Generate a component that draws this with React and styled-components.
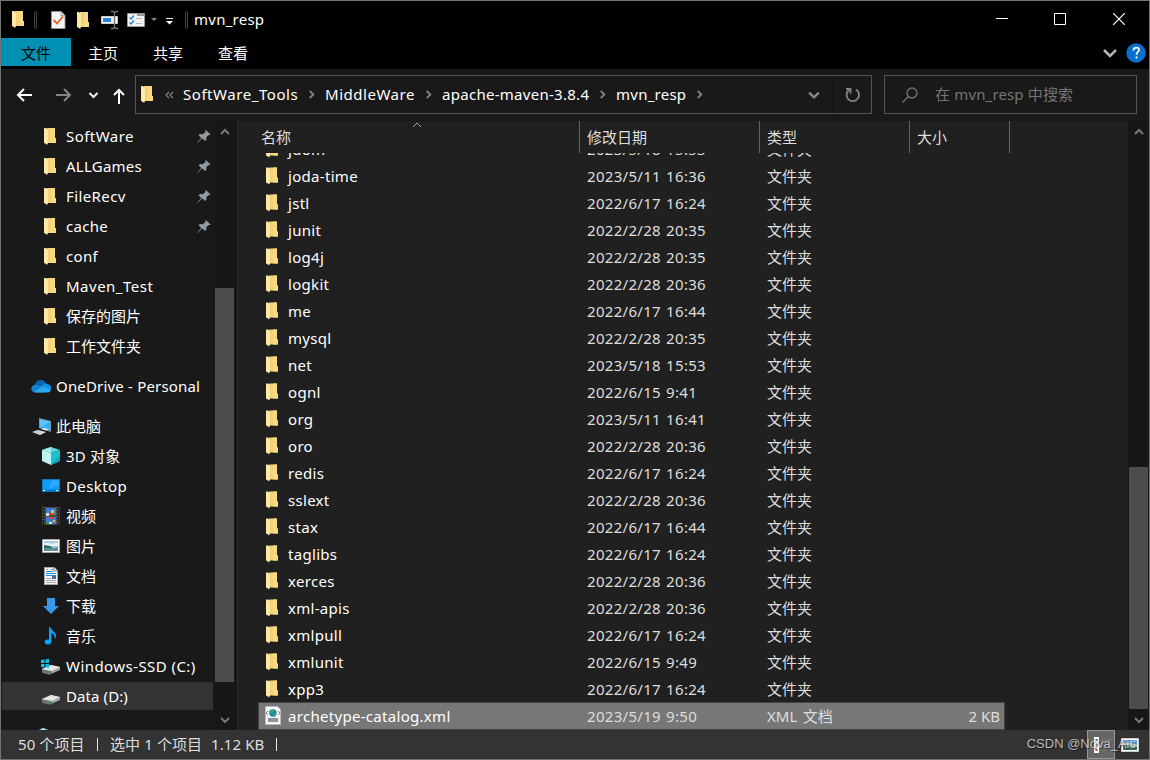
import React from 'react';
import styled, { createGlobalStyle } from 'styled-components';

const GlobalStyle = createGlobalStyle`
    * {
        box-sizing: border-box;
    }

    body {
        margin: 0;
        background: #191919;
        overflow: hidden;
    }

    svg {
        display: block;
        flex: none;
    }
`

const Window = styled.div`
    width: 1150px;
    height: 760px;
    display: flex;
    flex-direction: column;
    position: relative;
    border: 1px solid #747474;
    background: #191919;
    color: #fff;
    font-family: "Noto Sans", "Noto Sans CJK SC", sans-serif;
    font-size: 15px;
    line-height: 20px;
    white-space: nowrap;
`

const TitleBar = styled.div`
    height: 37px;
    display: flex;
    align-items: center;
    padding: 0 1px 1px 10px;
    background: #000;
`

const QuickAccess = styled.div`
    width: 183px;
    flex: none;
`

const Title = styled.div`
    flex: 1;
    letter-spacing: 0.25px;
`

const WindowButton = styled.div`
    width: 58.5px;
    display: flex;
    justify-content: center;
`

const Ribbon = styled.div`
    height: 31px;
    display: flex;
    background: #000;
`

const Tab = styled.div`
    width: 65px;
    height: 28px;
    display: flex;
    align-items: center;
    justify-content: center;
    padding: 2px 1px 0 0;
`

const FileTab = styled(Tab)`
    width: 70px;
    padding: 1px 0 0;
    color: #000;
    background: #0090b4;
`

const RibbonTools = styled.div`
    display: flex;
    align-items: center;
    height: 30px;
    gap: 9px;
    margin-left: auto;
    padding-right: 3px;
`

const NavBar = styled.div`
    height: 52px;
    display: flex;
    padding: 6px 12px 0 0;
`

const NavButtons = styled.div`
    width: 134px;
    flex: none;
`

const AddressBox = styled.div`
    width: 737px;
    height: 39px;
    display: flex;
    align-items: center;
    padding: 0 0 0 5px;
    border: 1px solid #535353;
`

const CrumbArrow = styled.div`
    width: 27px;
    display: flex;
    justify-content: center;
`

const Crumb = styled.div`
    width: ${({ $width }) => $width}px;
    padding-bottom: 2px;
    letter-spacing: ${({ $tracking }) => $tracking}px;
`

const AddressTools = styled.div`
    display: flex;
    align-items: center;
    gap: 5px;
    height: 100%;
    margin-left: auto;
`

const Refresh = styled.div`
    width: 39px;
    height: 100%;
    display: flex;
    align-items: center;
    justify-content: center;
    padding-left: 2px;
    border-left: 1px solid #131313;
`

const SearchBox = styled.div`
    width: 253px;
    height: 39px;
    display: flex;
    align-items: center;
    gap: 17px;
    margin-left: 12px;
    padding-left: 17px;
    border: 1px solid #535353;
    color: #757575;
`

const SearchText = styled.div`
    padding-bottom: 2px;
    letter-spacing: 0.15px;
`

const Body = styled.div`
    height: 609px;
    display: flex;
`

const Sidebar = styled.div`
    width: 213px;
    display: flex;
    flex-direction: column;
    gap: 2px;
    overflow: hidden;
    padding: 1px 1px 0 1px;
`

const SideItem = styled.div`
    height: 28px;
    flex: none;
    display: flex;
    align-items: center;
    margin-top: ${({ $level }) => ($level === 1 ? 10 : 0)}px;
    padding-left: ${({ $level }) => ($level === 1 ? 29 : 39)}px;
    padding-right: 2px;
    letter-spacing: ${({ $tracking }) => $tracking || 0}px;
    background: ${({ $active }) => ($active ? '#333' : 'none')};
`

const SideIcon = styled.div`
    width: 25px;
    height: 20px;
`

const Pin = styled.div`
    margin-left: auto;
    padding-top: 1px;
`

const ScrollBar = styled.div`
    width: 21px;
    display: flex;
    flex-direction: column;
    align-items: center;
    background: #171717;
`

const ScrollArrow = styled.div`
    height: 21px;
    display: flex;
    align-items: center;
`

const Track = styled.div`
    flex: 1;
    width: 19px;
    padding-top: ${({ $offset }) => $offset}px;
`

const Thumb = styled.div`
    height: ${({ $length }) => $length}px;
    background: #4d4d4d;
`

const Divider = styled.div`
    width: 3px;
    border-left: 1px solid #131313;
    border-right: 1px solid #2b2b2b;
    background: #191919;
`

const FilePane = styled.div`
    flex: 1;
    overflow: hidden;
    background: #202020;
    color: #dedede;
`

const Columns = styled.div`
    height: 32px;
    display: flex;
    position: relative;
    padding-left: 16px;
`

const Column = styled.div`
    width: ${({ $width }) => $width}px;
    border-right: 1px solid #636363;
    padding: 6px 0 0 7px;
`

const SortMark = styled.div`
    position: absolute;
    left: 173.5px;
    top: -1.5px;
`

const FileList = styled.div`
    height: 577px;
    overflow: hidden;
    padding-left: 20px;
`

const Rows = styled.div`
    margin-top: -17px;
`

const Row = styled.div`
    width: 747px;
    height: 27px;
    display: flex;
    align-items: center;
    padding: 0 1px 2px;
`

const SelectedRow = styled(Row)`
    height: 28px;
    margin-top: -1px;
    padding: 0;
    border: 1px solid #444;
    background: #777;
`

const FileIcon = styled.div`
    width: 29px;
    height: 20px;
    padding-left: 5px;
`

const FileName = styled.div`
    width: 299px;
    letter-spacing: 0.3px;
    color: #fff;
`

const FileDate = styled.div`
    width: 180px;
    letter-spacing: 0.3px;
    word-spacing: 1px;
`

const FileType = styled.div`
    width: 150px;
    word-spacing: 1.5px;
`

const FileSize = styled.div`
    width: 83px;
    text-align: right;
`

const StatusBar = styled.div`
    height: 29px;
    display: flex;
    align-items: center;
    padding-left: 17px;
    background: #333;
    color: #dedede;
`

const StatusText = styled.div`
    width: ${({ $width }) => $width}px;
    padding-bottom: 2px;
    letter-spacing: 0.1px;
`

const StatusLine = styled.div`
    width: 1px;
    height: 13px;
    margin-right: ${({ $space }) => $space || 0}px;
    background: #e8e8e8;
`

const ViewButtons = styled.div`
    display: flex;
    align-items: center;
    height: 100%;
    margin-left: auto;
    padding-right: 10px;
`

const ViewButton = styled.div`
    width: 28px;
    height: 29px;
    display: flex;
    align-items: center;
    margin-right: 6px;
    padding-left: 5px;
    border: 1px solid #969696;
    background: #666;
`

const Watermark = styled.div`
    position: absolute;
    right: 13px;
    bottom: 7px;
    font: 13px/16px "Liberation Sans", sans-serif;
    color: rgba(225, 225, 225, 0.78);
    text-shadow: 1px 1px 1px rgba(0, 0, 0, 0.5);
`

const FolderShape = () => (
    <>
        <path d="M3 0h8v10h1v5H3z" fill="#f3d27a" />
        <path d="M7 0h4v10h1v5H7z" fill="#f9da80" />
        <path d="M0 0h2l2 2v13l-1 2-1-1-2-1z" fill="#ffe9a6" />
    </>
)

const Folder = () => (
    <svg width="20" height="20" viewBox="-2 -1.500 20 20"><FolderShape /></svg>
)

const Chevron = ({ direction, size = 10, color = '#858585', weight = 2 }) => {
    const shapes = {
        up: 'M1 7l4-4 4 4',
        down: 'M1 3l4 4 4-4',
        right: 'M3 1l4 4-4 4',
    }
    return (
        <svg width={size} height={size} viewBox="0 0 10 10" fill="none" stroke={color} strokeWidth={weight}>
            <path d={shapes[direction]} />
        </svg>
    )
}

const QuickIcons = () => (
    <svg width="183" height="30" viewBox="11 4 183 30">
        <g transform="translate(12 11)"><FolderShape /></g>
        <rect x="34.500" y="11.500" width="2" height="17" rx="1" fill="none" stroke="#484848" />
        <path d="M51.500 11.500h9.500l4 4v13H51.500z" fill="#f4f4f4" stroke="#999" strokeWidth=".8" />
        <path d="M61 11.500v4h4" fill="#ddd" stroke="#888" strokeWidth=".7" />
        <path d="M53.500 20l3.500 3.500 6-7" fill="none" stroke="#e66022" strokeWidth="1.800" />
        <g transform="translate(77 12)"><FolderShape /></g>
        <path d="M101.500 16.500h16v7h-16z" fill="#f0f0f0" stroke="#ccc" />
        <path d="M103 18h8v4h-8z" fill="#2786d9" />
        <path d="M114.500 12v16M111 11.500h2l1.500 1 1.500-1h2M111 28.500h2l1.500-1 1.500 1h2" fill="none" stroke="#777" strokeWidth="1.300" />
        <path d="M127.500 13.500h17v13h-17z" fill="#f3f3f3" stroke="#999" />
        <path d="M137 14h7v2h-7z" fill="#999" />
        <path d="M129.500 17.500l1.500 1.500 3-3.500M129.500 22.500l1.500 1.500 3-3.500" fill="none" stroke="#2786d9" strokeWidth="1.500" />
        <path d="M136 18.500h6M136 23.500h6" stroke="#bbb" />
        <path d="M151 18h6l-3 3z" fill="#858585" />
        <path d="M166 18.500h7" stroke="#eee" />
        <path d="M166 21h7l-3.500 3.500z" fill="#fff" />
        <rect x="185.500" y="11.500" width="2" height="17" rx="1" fill="none" stroke="#484848" />
    </svg>
)

const NavIcons = () => (
    <svg width="134" height="39" viewBox="1 75 134 39" fill="none" strokeWidth="2">
        <path d="M32 95H18m6-6l-6 6 6 6" stroke="#fff" />
        <path d="M56 95h14m-6-6l6 6-6 6" stroke="#858585" />
        <path d="M89.500 93l4 4 4-4" stroke="#f0f0f0" />
        <path d="M119 104V90m-5 5l5-5 5 5" stroke="#fff" />
    </svg>
)

const PinIcon = () => (
    <svg width="14" height="14" viewBox="0 0 14 14">
        <path d="M9 0l4.500 4.500-1.200.7-.7-.2-2.300 2.300.2 2.200-1.500 1.600-2.800-2.800L.5 13l-.3-.3 4-4.800-2.600-2.600L3 4l2.700.2L8.500 2l-.2-1.200z" fill="#909ba3" />
    </svg>
)

const DriveShape = () => (
    <>
        <path d="M1 13l9-4 9 2v3l-9 4-9-2z" fill="#a4a4a4" />
        <path d="M1 13l9-4 9 2-8 4z" fill="#e5e5e5" />
        <path d="M1 13.500l10 2V18l-3 .8-7-2z" fill="#707070" />
        <path d="M7 16l2 .5" stroke="#20b526" strokeWidth="1.500" />
    </>
)

const sideIcons = {
    folder: <g transform="translate(3 2)"><FolderShape /></g>,
    onedrive: (
        <>
            <path d="M4 8.500A6 6 0 0 1 15 7l1 5H5z" fill="#0864b8" />
            <path d="M1 15a4 4 0 0 1 2-6 5 5 0 0 1 5 1l7 5-3 1.500H4A4 4 0 0 1 1 15z" fill="#1683d2" />
            <path d="M10 10a6 6 0 0 1 7-2 4 4 0 0 1 3 5l-7 1-5-3z" fill="#148ee0" />
            <path d="M3 16l8-5 2-.5 7 3a3.500 3.500 0 0 1-3 3H5z" fill="#28a8ed" />
        </>
    ),
    computer: (
        <>
            <path d="M8 2l12 3v11L8 12z" fill="#7898a8" />
            <path d="M9 3.300l10 2.500v8.700L9 11.600z" fill="#35b1f8" />
            <path d="M9 3.300l10 2.500L9 11.600z" fill="#5cc2fa" />
            <path d="M1 16l6-2 8 2-6 3z" fill="#e1e7ed" />
            <path d="M10 13l3-1 5 1.500-3 1z" fill="#eee" />
            <path d="M3 16l6 1.500M5 15l6 1.500" stroke="#a0abb2" strokeWidth=".7" />
        </>
    ),
    cube: (
        <>
            <path d="M1 4l9-3 9 3-9 3z" fill="#5cd5df" />
            <path d="M1 4l9 3v12l-9-4z" fill="#c0f2f2" />
            <path d="M10 7l9-3v11l-9 4z" fill="#20bfce" />
            <path d="M1 4l9-3v6z" fill="#a1eff3" />
            <path d="M10 19l9-4V9z" fill="#0ba6bd" />
        </>
    ),
    desktop: (
        <>
            <path d="M1 3h18v13H1z" fill="#0b77c8" />
            <path d="M2 4h16v9.500H2z" fill="#0d9cf7" />
            <path d="M11 4h7v5L7 13.500z" fill="#2aa9ff" />
            <path d="M2 14.500h2m11 0h2" stroke="#fff" />
        </>
    ),
    video: (
        <>
            <path d="M1 1h18v18H1z" fill="#484848" />
            <path d="M2.500 2v17M17.500 2v17" stroke="#161616" strokeWidth="1.500" strokeDasharray="2 1" />
            <path d="M5 2h10v7H5zM5 11h10v7H5z" fill="#3b78d8" />
            <path d="M5 7h3v3H5zM7 16h4v2H7z" fill="#ddd" />
            <path d="M10 4h3v3h-3zM12 14h2v2h-2z" fill="#efc51a" />
            <path d="M8 7h5v2H8zM9 11h3v2H9z" fill="#d34a22" />
            <path d="M12 7h3v2h-3zM5 16h3v2H5z" fill="#399238" />
        </>
    ),
    picture: (
        <>
            <path d="M1.500 3.500h17v13h-17z" fill="#fff" stroke="#aaa" />
            <path d="M3 5h14v10H3z" fill="#a9cae8" />
            <path d="M3 7h5l2 1 3-1h4v3H3z" fill="#e7f0f4" />
            <path d="M3 9l6 1 3 2H3z" fill="#286d59" />
            <path d="M3 12h10l4-1v4H3z" fill="#5f8f98" />
        </>
    ),
    document: (
        <>
            <path d="M3.500 1.500h10l3 3v14h-13z" fill="#f4f4f4" stroke="#aaa" />
            <path d="M13 1v4h4" fill="none" stroke="#777" />
            <path d="M6 3.500h1m3 0h2M5 5.500h7M5 7.500h10M5 9.500h10" stroke="#298bd9" />
            <path d="M5 12.500h5M5 14.500h10M5 16.500h10" stroke="#aaa" />
            <path d="M11 10h4v3h-4z" fill="#456b9c" />
        </>
    ),
    download: <path d="M6 2h8v8h4l-8 8-8-8h4z" fill="#3997ea" />,
    music: (
        <>
            <ellipse cx="7" cy="16" rx="3.300" ry="2.400" fill="#08a3ff" />
            <path d="M9 1c.8 3 6 5 6 9 0 1.600-.5 2.500-1 3 .2-3-1.500-5-3.500-6v9H8V1z" fill="#08a3ff" />
        </>
    ),
    system: (
        <>
            <DriveShape />
            <path d="M0 4l3.500-.5V7H0zM4.500 3.400L8 3v4H4.500zM0 8h3.500v3.500L0 11zM4.500 8H8v4l-3.500-.4z" fill="#16bfe9" />
        </>
    ),
    drive: <DriveShape />,
    network: (
        <>
            <path d="M7 5a6 4 0 0 1 11 0z" fill="#87bdda" />
            <path d="M10 3l3-1 1 2-3 1z" fill="#d6e7ef" />
        </>
    ),
}

const places = [
    { name: 'SoftWare', icon: 'folder', pinned: true, tracking: 0.45 },
    { name: 'ALLGames', icon: 'folder', pinned: true, tracking: 0.25 },
    { name: 'FileRecv', icon: 'folder', pinned: true, tracking: 0.4 },
    { name: 'cache', icon: 'folder', pinned: true, tracking: 0.3 },
    { name: 'conf', icon: 'folder', tracking: 0.3 },
    { name: 'Maven_Test', icon: 'folder', tracking: 0.5 },
    { name: '保存的图片', icon: 'folder' },
    { name: '工作文件夹', icon: 'folder' },
    { name: 'OneDrive - Personal', icon: 'onedrive', level: 1, tracking: 0.18 },
    { name: '此电脑', icon: 'computer', level: 1 },
    { name: '3D 对象', icon: 'cube', tracking: 0.2 },
    { name: 'Desktop', icon: 'desktop', tracking: 0.4 },
    { name: '视频', icon: 'video' },
    { name: '图片', icon: 'picture' },
    { name: '文档', icon: 'document' },
    { name: '下载', icon: 'download' },
    { name: '音乐', icon: 'music' },
    { name: 'Windows-SSD (C:)', icon: 'system', tracking: 0.44 },
    { name: 'Data (D:)', icon: 'drive', active: true, tracking: 0.1 },
    { name: '', icon: 'network', level: 1 },
]

const files = [
    ['jdom', '2023/5/18 15:53'],
    ['joda-time', '2023/5/11 16:36'],
    ['jstl', '2022/6/17 16:24'],
    ['junit', '2022/2/28 20:35'],
    ['log4j', '2022/2/28 20:35'],
    ['logkit', '2022/2/28 20:36'],
    ['me', '2022/6/17 16:44'],
    ['mysql', '2022/2/28 20:35'],
    ['net', '2023/5/18 15:53'],
    ['ognl', '2022/6/15 9:41'],
    ['org', '2023/5/11 16:41'],
    ['oro', '2022/2/28 20:36'],
    ['redis', '2022/6/17 16:24'],
    ['sslext', '2022/2/28 20:36'],
    ['stax', '2022/6/17 16:44'],
    ['taglibs', '2022/6/17 16:24'],
    ['xerces', '2022/2/28 20:36'],
    ['xml-apis', '2022/2/28 20:36'],
    ['xmlpull', '2022/6/17 16:24'],
    ['xmlunit', '2022/6/15 9:49'],
    ['xpp3', '2022/6/17 16:24'],
]

// name, column width, letter spacing
const crumbs = [
    ['SoftWare_Tools', 115, 0.55],
    ['MiddleWare', 90, 0.53],
    ['apache-maven-3.8.4', 147, 0.28],
    ['mvn_resp', 70, 0.25],
]

const XmlFile = () => (
    <svg width="18" height="20" viewBox="0 0 18 20">
        <path d="M1.500.5h12l3 3v15h-15z" fill="#f5f5f8" stroke="#bbb" />
        <path d="M4 5l-2 2 2 2M14 5l2 2-2 2" fill="none" stroke="#888" />
        <circle cx="9" cy="7" r="3.700" fill="#1685c7" />
        <path d="M7 3.500l3 1-1 2-3 1-.8-2zM9 7l3 1-1 2.500H9z" fill="#37a64a" />
        <path d="M4 12h10v4H4z" fill="#8f8f9d" />
    </svg>
)

const Scroller = ({ offset, length }) => (
    <ScrollBar>
        <ScrollArrow><Chevron direction="up" color="#777" /></ScrollArrow>
        <Track $offset={offset}><Thumb $length={length} /></Track>
        <ScrollArrow><Chevron direction="down" color="#777" /></ScrollArrow>
    </ScrollBar>
)

const App = () => (
    <>
        <GlobalStyle />
        <Window>
            <TitleBar>
                <QuickAccess><QuickIcons /></QuickAccess>
                <Title>mvn_resp</Title>
                <WindowButton>
                    <svg width="12" height="12"><path d="M0 5.500h12" stroke="#fff" /></svg>
                </WindowButton>
                <WindowButton>
                    <svg width="12" height="12"><path d="M.5.5h11v11H.5z" fill="none" stroke="#fff" /></svg>
                </WindowButton>
                <WindowButton>
                    <svg width="12" height="12"><path d="M0 0l12 12M12 0L0 12" stroke="#fff" strokeWidth="1.200" /></svg>
                </WindowButton>
            </TitleBar>
            <Ribbon>
                <FileTab>文件</FileTab>
                <Tab>主页</Tab>
                <Tab>共享</Tab>
                <Tab>查看</Tab>
                <RibbonTools>
                    <svg width="14" height="9"><path d="M1 1l6 6 6-6" fill="none" stroke="#b5b5b5" strokeWidth="2.500" /></svg>
                    <svg width="20" height="20" viewBox="0 0 20 20">
                        <circle cx="10" cy="10" r="9.700" fill="#0870ce" />
                        <path d="M7.500 7.500c0-4 5.500-3.500 5.500-.5 0 2-2.500 2-2.500 4.800M10.500 13.500v2" fill="none" stroke="#fff" strokeWidth="1.800" />
                    </svg>
                </RibbonTools>
            </Ribbon>
            <NavBar>
                <NavButtons><NavIcons /></NavButtons>
                <AddressBox>
                    <svg width="18" height="21" viewBox="0 -2 18 21"><FolderShape /></svg>
                    <svg width="24" height="10" viewBox="0 0 24 10">
                        <path d="M10 2L7 5l3 3M14 2l-3 3 3 3" fill="none" stroke="#858585" strokeWidth="1.200" />
                    </svg>
                    {crumbs.map(([name, width, tracking]) => (
                        <React.Fragment key={name}>
                            <Crumb $width={width} $tracking={tracking}>{name}</Crumb>
                            <CrumbArrow><Chevron direction="right" size={9} /></CrumbArrow>
                        </React.Fragment>
                    ))}
                    <AddressTools>
                        <CrumbArrow><Chevron direction="down" size={12} /></CrumbArrow>
                        <Refresh>
                            <svg width="16" height="16" viewBox="0 0 16 16" fill="none" stroke="#858585" strokeWidth="1.800">
                                <path d="M11 2.600A6.200 6.200 0 1 1 4 3M1 2h4.500v4.500" />
                            </svg>
                        </Refresh>
                    </AddressTools>
                </AddressBox>
                <SearchBox>
                    <svg width="16" height="16" viewBox="0 0 16 16" fill="none" stroke="#757575" strokeWidth="1.300">
                        <circle cx="10" cy="6" r="5" />
                        <path d="M6.500 9.500L.5 15.500" />
                    </svg>
                    <SearchText>在 mvn_resp 中搜索</SearchText>
                </SearchBox>
            </NavBar>
            <Body>
                <Sidebar>
                    {places.map(({ name, icon, level, pinned, active, tracking }) => (
                        <SideItem key={icon + name} $level={level} $active={active} $tracking={tracking}>
                            <SideIcon>
                                <svg width="20" height="20" viewBox="0 0 20 20">{sideIcons[icon]}</svg>
                            </SideIcon>
                            {name}
                            {pinned ? <Pin><PinIcon /></Pin> : null}
                        </SideItem>
                    ))}
                </Sidebar>
                <Scroller offset={146} length={394} />
                <Divider />
                <FilePane>
                    <Columns>
                        <Column $width={326}>名称</Column>
                        <Column $width={180}>修改日期</Column>
                        <Column $width={150}>类型</Column>
                        <Column $width={100}>大小</Column>
                        <SortMark><Chevron direction="up" weight={1} color="#a5a5a5" /></SortMark>
                    </Columns>
                    <FileList>
                        <Rows>
                            {files.map(([name, date]) => (
                                <Row key={name}>
                                    <FileIcon><Folder /></FileIcon>
                                    <FileName>{name}</FileName>
                                    <FileDate>{date}</FileDate>
                                    <FileType>文件夹</FileType>
                                </Row>
                            ))}
                            <SelectedRow>
                                <FileIcon><XmlFile /></FileIcon>
                                <FileName>archetype-catalog.xml</FileName>
                                <FileDate>2023/5/19 9:50</FileDate>
                                <FileType>XML 文档</FileType>
                                <FileSize>2 KB</FileSize>
                            </SelectedRow>
                        </Rows>
                    </FileList>
                </FilePane>
                <Scroller offset={325} length={242} />
            </Body>
            <StatusBar>
                <StatusText $width={79}>50 个项目</StatusText>
                <StatusLine $space={12} />
                <StatusText $width={101}>选中 1 个项目</StatusText>
                <StatusText $width={65}>1.12 KB</StatusText>
                <StatusLine />
                <ViewButtons>
                    <ViewButton>
                        <svg width="19" height="16">
                            <path d="M1 0h5v16H1z" fill="#fff" />
                            <path d="M2.500 3h2M2.500 8h2" stroke="#397a68" strokeWidth="2" />
                            <path d="M2.500 13h2" stroke="#c83b20" strokeWidth="2" />
                            <path d="M9 2.500h4M15 2.500h4M9 8.500h4M15 8.500h4M9 13.500h4" stroke="#777" />
                        </svg>
                    </ViewButton>
                    <svg width="18" height="14">
                        <path d="M.5.5h17v13H.5z" fill="#fff" stroke="#ccc" />
                        <path d="M2 2h14v10H2z" fill="#5f9fe2" />
                        <path d="M2 5h8l6 2v2H2z" fill="#bcdde8" />
                        <path d="M2 7h6l3 2h5v3H2z" fill="#3c715f" />
                    </svg>
                </ViewButtons>
            </StatusBar>
            <Watermark>CSDN @Nova_Ais</Watermark>
        </Window>
    </>
)

export default App;
